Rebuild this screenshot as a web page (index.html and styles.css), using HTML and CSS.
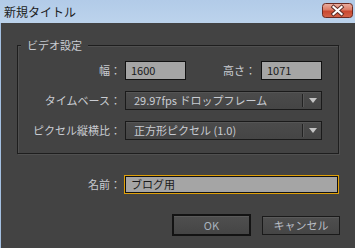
FILE: index.html
```html
<!DOCTYPE html>
<html lang="ja">
<head>
<meta charset="utf-8">
<title>新規タイトル</title>
<link rel="stylesheet" href="styles.css">
</head>
<body>
<div class="window">
  <div class="titlebar">
    <span class="title">新規タイトル</span>
    <span class="close">
      <svg width="31" height="15" viewBox="0 0 31 15">
        <defs>
          <linearGradient id="cg" x1="0" y1="0" x2="0" y2="1">
            <stop offset="0" stop-color="#eab0a2"/>
            <stop offset="0.45" stop-color="#dc7c66"/>
            <stop offset="0.55" stop-color="#c9472f"/>
            <stop offset="1" stop-color="#d4644a"/>
          </linearGradient>
        </defs>
        <rect x="0.5" y="0.5" width="30" height="14" rx="3" fill="url(#cg)" stroke="#6b2a22"/>
        <path d="M11.5 4 L19.5 11 M19.5 4 L11.5 11" stroke="#5a2a24" stroke-width="4" stroke-linecap="square"/>
        <path d="M11.5 4 L19.5 11 M19.5 4 L11.5 11" stroke="#ffffff" stroke-width="2.2" stroke-linecap="square"/>
      </svg>
    </span>
  </div>
  <div class="content">
    <div class="group">
      <span class="legend">ビデオ設定</span>
      <div class="grid">
        <span class="label">幅：</span>
        <div class="size-row">
          <span class="input">1600</span>
          <div class="pair">
            <span class="label">高さ：</span>
            <span class="input">1071</span>
          </div>
        </div>
        <span class="label">タイムベース：</span>
        <div class="select">
          <span class="select-text">29.97fps ドロップフレーム</span>
          <span class="sep"></span>
          <span class="arrow"></span>
        </div>
        <span class="label">ピクセル縦横比：</span>
        <div class="select">
          <span class="select-text">正方形ピクセル (1.0)</span>
          <span class="sep"></span>
          <span class="arrow"></span>
        </div>
      </div>
    </div>
    <div class="name-row">
      <span class="label">名前：</span>
      <span class="input name-input">ブログ用</span>
    </div>
    <div class="buttons">
      <span class="btn btn-default">OK</span>
      <span class="btn">キャンセル</span>
    </div>
  </div>
</div>
</body>
</html>
```
FILE: styles.css
```css
html, body {
  margin: 0;
  padding: 0;
  background: #434343;
}
body {
  width: 355px;
  height: 248px;
  overflow: hidden;
  font-family: "Noto Sans CJK JP", "Noto Sans", sans-serif;
  font-size: 11px;
}
.window {
  width: 354px;
  height: 248px;
  border-left: 1px solid #a4c0e2;
  background: #434343;
  display: flex;
  flex-direction: column;
}
.titlebar {
  height: 23px;
  margin-left: -1px;
  background: linear-gradient(#b2cbe8, #bcd3ec);
  display: flex;
  align-items: flex-start;
  justify-content: space-between;
}
.title {
  font-size: 12px;
  line-height: 14px;
  color: #1c1c1c;
  margin: 5px 0 0 4px;
}
.close {
  display: block;
  width: 31px;
  height: 15px;
  margin: 3px 2px 0 0;
}
.close svg { display: block; }
.content {
  display: flex;
  flex-direction: column;
}
.group {
  position: relative;
  margin: 22px 0 0 16px;
  width: 320px;
  height: 107px;
  border: 1px solid #1e1e1e;
  box-shadow: inset 1px 1px 0 #505050, 1px 1px 0 #505050;
}
.legend {
  position: absolute;
  left: 3px;
  top: -8px;
  padding: 0 6px 0 6px;
  background: #434343;
  color: #c9ccd2;
  line-height: 15px;
}
.grid {
  display: grid;
  grid-template-columns: 103px 197px;
  grid-auto-rows: 19px;
  column-gap: 4px;
  row-gap: 11px;
  margin-top: 15px;
}
.label {
  color: #c9ccd2;
  line-height: 19px;
  text-align: right;
  white-space: nowrap;
}
.size-row {
  display: flex;
  justify-content: space-between;
}
.pair {
  display: flex;
  gap: 5px;
}
.input {
  box-sizing: border-box;
  width: 61px;
  height: 19px;
  border: 1px solid #111;
  background: #a5a5a5;
  color: #1a1a1a;
  line-height: 17px;
  padding-left: 5px;
}
.select {
  box-sizing: border-box;
  height: 19px;
  border: 1px solid #1a1a1a;
  background: linear-gradient(#4b4b4b, #454545);
  box-shadow: inset 0 1px 0 #555;
  display: flex;
  align-items: center;
}
.select-text {
  flex: 1;
  color: #c9ccd2;
  padding-left: 8px;
  line-height: 17px;
}
.sep {
  width: 1px;
  height: 13px;
  background: #222;
  box-shadow: 1px 0 0 #575757;
}
.arrow {
  width: 0;
  height: 0;
  margin: 0 4px 0 6px;
  border-left: 4px solid transparent;
  border-right: 4px solid transparent;
  border-top: 5px solid #c4c4c4;
}
.name-row {
  display: grid;
  grid-template-columns: 103px 215px;
  column-gap: 3px;
  margin: 21px 0 0 17px;
}
.name-input {
  width: 215px;
  border: 1px solid #e0a008;
  box-shadow: inset 0 0 0 1px #111;
  padding-left: 6px;
}
.buttons {
  display: flex;
  justify-content: flex-end;
  align-items: center;
  gap: 11px;
  margin: 20px 15px 0 0;
}
.btn {
  box-sizing: border-box;
  width: 78px;
  height: 19px;
  border: 1px solid #1a1a1a;
  background: linear-gradient(#4f4f4f, #454545);
  box-shadow: inset 0 1px 0 #5a5a5a;
  color: #b9bdc5;
  text-align: center;
  line-height: 17px;
}
.btn-default {
  width: 79px;
  height: 22px;
  border: 2px solid #131313;
  line-height: 18px;
  color: #a8b2be;
}
```
